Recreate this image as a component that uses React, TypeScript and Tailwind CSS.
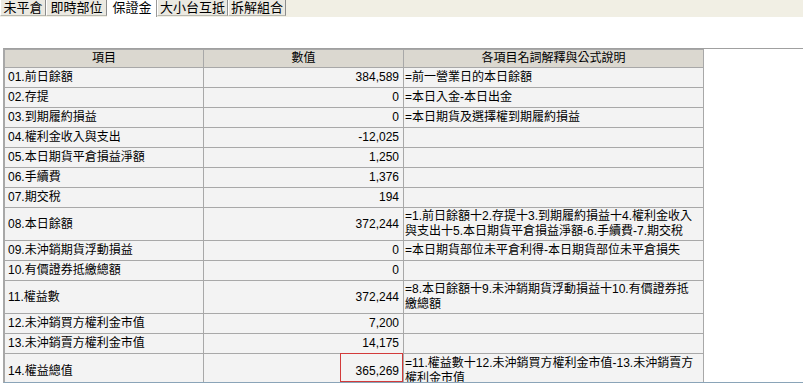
import React from "react";

type Row = { name: string; value: string; desc: string[]; tall?: boolean; mark?: boolean };

const rows: Row[] = [
  { name: "01.前日餘額", value: "384,589", desc: ["=前一營業日的本日餘額"] },
  { name: "02.存提", value: "0", desc: ["=本日入金-本日出金"] },
  { name: "03.到期履約損益", value: "0", desc: ["=本日期貨及選擇權到期履約損益"] },
  { name: "04.權利金收入與支出", value: "-12,025", desc: [] },
  { name: "05.本日期貨平倉損益淨額", value: "1,250", desc: [] },
  { name: "06.手續費", value: "1,376", desc: [] },
  { name: "07.期交稅", value: "194", desc: [] },
  {
    name: "08.本日餘額",
    value: "372,244",
    desc: ["=1.前日餘額十2.存提十3.到期履約損益十4.權利金收入", "與支出十5.本日期貨平倉損益淨額-6.手續費-7.期交稅"],
    tall: true,
  },
  { name: "09.未沖銷期貨浮動損益", value: "0", desc: ["=本日期貨部位未平倉利得-本日期貨部位未平倉損失"] },
  { name: "10.有價證券抵繳總額", value: "0", desc: [] },
  {
    name: "11.權益數",
    value: "372,244",
    desc: ["=8.本日餘額十9.未沖銷期貨浮動損益十10.有價證券抵", "繳總額"],
    tall: true,
  },
  { name: "12.未沖銷買方權利金市值", value: "7,200", desc: [] },
  { name: "13.未沖銷賣方權利金市值", value: "14,175", desc: [] },
  {
    name: "14.權益總值",
    value: "365,269",
    desc: ["=11.權益數十12.未沖銷買方權利金市值-13.未沖銷賣方", "權利金市值"],
    tall: true,
    mark: true,
  },
];

const tabs = [
  { label: "未平倉", w: "w-[46px]" },
  { label: "即時部位", w: "w-[61px]" },
  { label: "保證金", w: "w-[50px]", active: true },
  { label: "大小台互抵", w: "w-[71px]" },
  { label: "拆解組合", w: "w-[58px]" },
];

export default function App() {
  return (
    <div
      className="w-[803px] h-[384px] overflow-hidden bg-white text-[12px] text-black"
      style={{ fontFamily: '"Liberation Sans", "Noto Sans CJK TC", sans-serif' }}
    >
      <div className="flex h-[17px] bg-[#f1efe4]">
        {tabs.map((t) =>
          t.active ? (
            <div
              key={t.label}
              className={`${t.w} h-[17px] flex items-start justify-center pt-[1px] bg-white border-l border-white border-r border-r-[#9a9a9a] text-[13px] leading-[14px]`}
            >
              {t.label}
            </div>
          ) : (
            <div
              key={t.label}
              className={`${t.w} h-[16px] flex items-center justify-center bg-[#ebe9e1] border-l border-white border-r border-r-[#8c8c8c] border-b border-b-[#b8b8b0] text-[13px] leading-[14px]`}
            >
              {t.label}
            </div>
          )
        )}
      </div>
      <div className="h-[31px]" />
      <div className="ml-[3px] h-[335px] border-t border-t-[#a0a0a0] border-l border-l-[#a8a8a8] border-b border-b-[#8aa4b8] overflow-hidden">
        <div className="grid grid-cols-[198px_199px_299px] gap-px p-px bg-[#a8a8a8] w-fit">
          <div className="h-[17px] bg-[#dbd8d0] flex items-center justify-center leading-[15px]">項目</div>
          <div className="h-[17px] bg-[#dbd8d0] flex items-center justify-center leading-[15px]">數值</div>
          <div className="h-[17px] bg-[#dbd8d0] flex items-center justify-center leading-[15px]">各項目名詞解釋與公式說明</div>
          {rows.map((r) => {
            const h = r.mark ? "h-[34px]" : r.tall ? "h-[32px]" : "h-[19px]";
            return (
              <React.Fragment key={r.name}>
                <div className={`${h} bg-[#f3f3f3] flex items-center pl-[3px] leading-[15px] whitespace-nowrap`}>
                  {r.name}
                </div>
                <div className={`${h} relative bg-[#f3f3f3] flex items-center justify-end pr-[4px] leading-[15px]`}>
                  {r.value}
                  {r.mark && (
                    <div className="absolute right-[0px] top-[-1px] w-[63px] h-[29px] border border-[#d23a3a]" />
                  )}
                </div>
                <div className={`${h} bg-[#f3f3f3] flex flex-col justify-center pl-[1px] leading-[15px] whitespace-nowrap`}>
                  {r.desc.map((d) => (
                    <div key={d}>{d}</div>
                  ))}
                </div>
              </React.Fragment>
            );
          })}
        </div>
      </div>
    </div>
  );
}
